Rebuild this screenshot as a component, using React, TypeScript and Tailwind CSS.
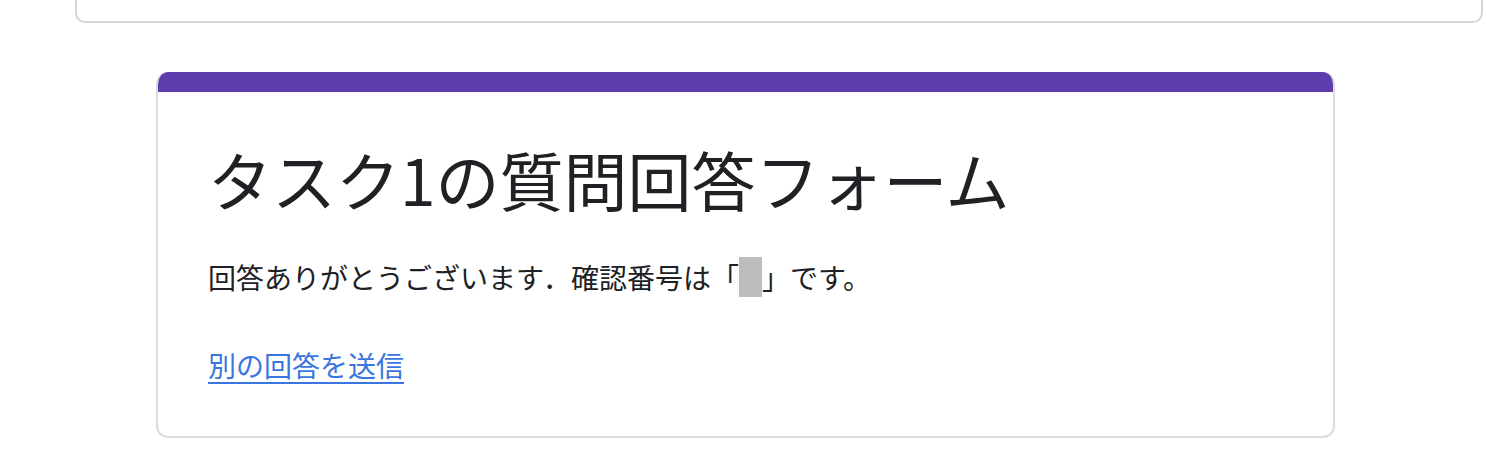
export default function App() {
  return (
    <div
      className="min-h-[458px] bg-white"
      style={{ fontFamily: '"Noto Sans CJK JP", "Noto Sans", sans-serif' }}
    >
      <div className="ml-[75px] h-[23px] w-[1408px] rounded-b-[10px] border-x-2 border-b-2 border-[#d6d6d6]" />
      <div className="ml-[156px] mt-[49px] w-[1179px] overflow-hidden rounded-[12px] border-2 border-t-0 border-[#dadce0]">
        <div className="-mx-[2px] h-[20px] bg-[#5f3dad]" />
        <div className="px-[50px] pt-[40px] pb-[51px] text-[#202124]">
          <h1 className="text-[64px] leading-[92px] font-normal">タスク1の質問回答フォーム</h1>
          <p className="mt-[33px] flex items-center text-[28px] leading-[40px]">
            回答ありがとうございます．確認番号は「
            <span className="inline-block h-[40px] w-[23px] bg-[#bdbdbd]" />
            」です。
          </p>
          <a href="#" className="mt-[48px] inline-block text-[28px] leading-[40px] text-[#3a76e0] underline underline-offset-[5px]">
            別の回答を送信
          </a>
        </div>
      </div>
    </div>
  );
}
